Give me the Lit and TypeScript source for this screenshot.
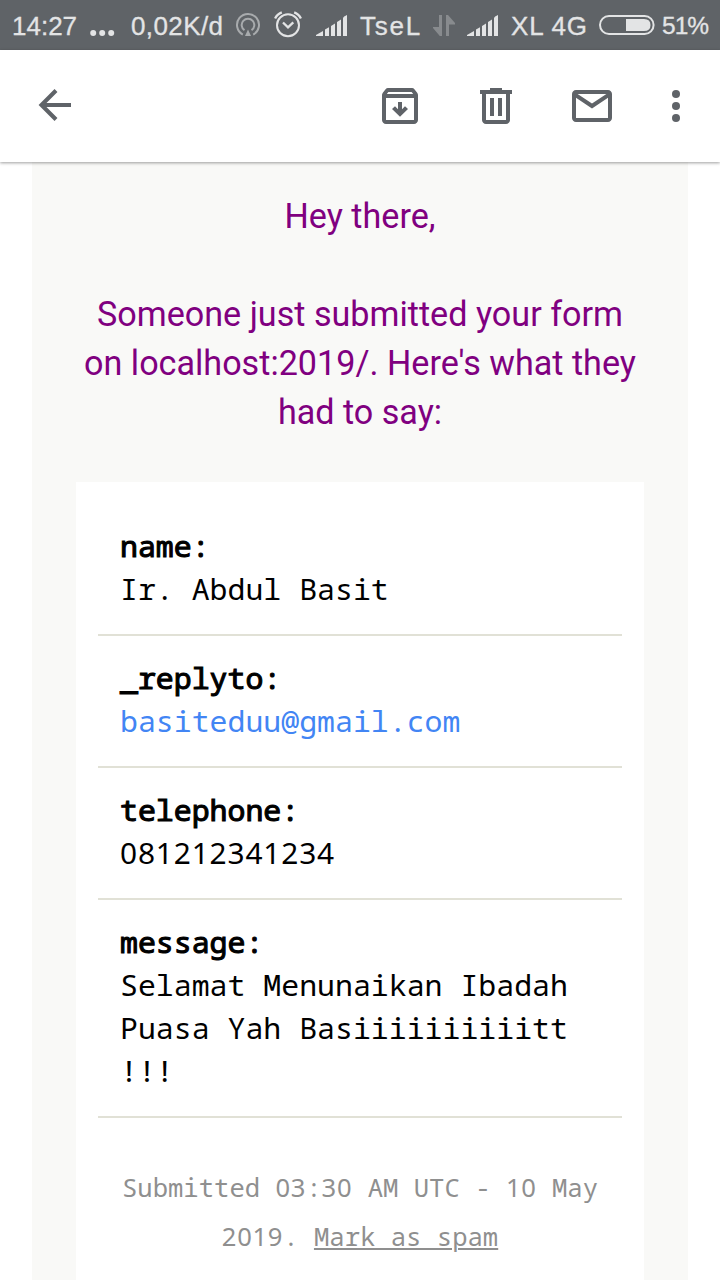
import { LitElement, html, css } from "lit";
import { customElement } from "lit/decorators.js";

const signal = html`<svg class="g" width="32" height="22" viewBox="0 0 32 22">
  <path fill="#e3e4e5" d="M0 21V20L7 16V21ZM9 21V14.4L13 12.2V21ZM15 21V11L19 8.6V21ZM21 21V7L25 4.5V21ZM27 21V3Q27.2 1.6 31 0V21Z"/>
</svg>`;

const fields = [
  { key: "name", value: html`Ir. Abdul Basit` },
  { key: "_replyto", value: html`<a class="mail">basiteduu@gmail.com</a>` },
  { key: "telephone", value: html`<span class="num">081212341234</span>` },
  { key: "message", value: html`Selamat Menunaikan Ibadah Puasa Yah Basiiiiiiiiiitt !!!` },
];

@customElement("status-bar")
class StatusBar extends LitElement {
  static styles = css`
    :host {
      display: grid;
      grid-template-columns: 78px 41px 104px 39px 42px 44px 73px 34px 44px 87px 64px 50px;
      align-items: center;
      height: 50px;
      padding-left: 12px;
      box-sizing: border-box;
      background: #5f6367;
      color: #e3e4e5;
      font: 26px/50px "Liberation Sans", Arial, sans-serif;
      white-space: nowrap;
      overflow: hidden;
    }
    span { padding-top: 1px; height: 50px; box-sizing: border-box; -webkit-text-stroke: 0.3px #e3e4e5; }
    .speed { letter-spacing: 0.4px; }
    .tsel { letter-spacing: 1.8px; }
    .xl { letter-spacing: 0.8px; }
    .pct { font-size: 24.5px; letter-spacing: -1px; }
    svg { display: block; }
    .g { margin-top: 1px; }
  `;
  render() {
    return html`
      <span>14:27</span>
      <svg width="26" height="50" viewBox="0 0 26 50" fill="#e3e4e5"><circle cx="3.2" cy="33" r="3"/><circle cx="12.2" cy="33" r="3"/><circle cx="21.2" cy="33" r="3"/></svg>
      <span class="speed">0,02K/d</span>
      <svg width="26" height="50" viewBox="0 0 26 50" fill="none" stroke="#a8abad" stroke-width="2">
        <path d="M7.8 34.6A11 11 0 1 1 18.2 34.6M9.5 30.2A6.3 6.3 0 1 1 16.5 30.2"/>
        <path d="M13 29.5L16 36H10Z" fill="#a8abad" stroke="none"/>
      </svg>
      <svg width="28" height="50" viewBox="0 0 28 50" fill="none" stroke="#e3e4e5" stroke-width="2">
        <circle cx="14" cy="25.3" r="11"/>
        <path d="M9 22.5L14 27.3L19.3 22.3M1.1 18.5Q3 14.2 7.8 12.4M26.9 18.5Q25 14.2 20.2 12.4" stroke-width="2.3"/>
      </svg>
      ${signal}
      <span class="tsel">TseL</span>
      <svg width="24" height="50" viewBox="0 0 24 50" fill="#888b8e"><path d="M9 15V36H6.8L0 28V27H6V15ZM13 36V15H15L22 23V24.5H16V36Z"/></svg>
      ${signal}
      <span class="xl">XL 4G</span>
      <svg width="57" height="50" viewBox="0 0 57 50"><rect x="2" y="16" width="53.6" height="18" rx="9" fill="none" stroke="#e3e4e5" stroke-width="2"/><path d="M28 19H46Q52.5 19 52.5 25T46 31H28Z" fill="#e3e4e5"/></svg>
      <span class="pct">51%</span>
    `;
  }
}

@customElement("mail-toolbar")
class MailToolbar extends LitElement {
  static styles = css`
    :host {
      display: flex;
      align-items: center;
      height: 112px;
      padding: 0 20px 0 32px;
      box-sizing: border-box;
      background: #fff;
      box-shadow: 0 1px 3px rgba(0, 0, 0, 0.38);
      position: relative;
    }
    svg { display: block; width: 48px; height: 48px; }
    .back { margin: -2px auto 0 0; }
    .icon { margin-right: 48px; }
    .more { margin-right: 0; margin-left: -12px; }
  `;
  render() {
    return html`
      <svg class="back" viewBox="0 0 48 48" fill="none" stroke="#5f6368"><path d="M39 24H10M24 9.5L9.5 24L24 38.5" stroke-width="4.1"/></svg>
      <svg class="icon" viewBox="0 0 24 24" fill="#5f6368"><path fill-rule="evenodd" d="M20.5 5.2L19.2 3.6C18.9 3.2 18.5 3 18 3H6C5.5 3 5.1 3.2 4.8 3.6L3.5 5.2C3.2 5.6 3 6 3 6.5V19C3 20.1 3.9 21 5 21H19C20.1 21 21 20.1 21 19V6.5C21 6 20.8 5.6 20.5 5.2ZM6.2 5H17.8L18.6 6H5.4ZM5 19V8H19V19Z"/><path d="M11 10V13.6L9.5 12.1L8 13.5L12 17.4L16 13.5L14.5 12.1L13 13.6V10Z"/></svg>
      <svg class="icon" viewBox="0 0 24 24" fill="#5f6368"><path fill-rule="evenodd" d="M15 4V3H9V4H4V6H5V19C5 20.1 5.9 21 7 21H17C18.1 21 19 20.1 19 19V6H20V4ZM17 19H7V6H17ZM9 8H11V17H9ZM13 8H15V17H13Z"/></svg>
      <svg class="icon" viewBox="0 0 24 24" fill="#5f6368"><path fill-rule="evenodd" d="M20 4H4C2.9 4 2 4.9 2 6V18C2 19.1 2.9 20 4 20H20C21.1 20 22 19.1 22 18V6C22 4.9 21.1 4 20 4ZM19.2 6L12 10.8L4.8 6ZM4 18V7.9L12 13.2L20 7.9V18Z"/></svg>
      <svg class="more" viewBox="0 0 24 24" fill="#5f6368"><circle cx="12" cy="6" r="2"/><circle cx="12" cy="12" r="2"/><circle cx="12" cy="18" r="2"/></svg>
    `;
  }
}

@customElement("app-root")
class AppRoot extends LitElement {
  static styles = css`
    :host { display: block; width: 720px; height: 1280px; overflow: hidden; background: #fff; }
    .panel {
      margin: 0 32px;
      height: 1118px;
      padding: 30px 44px 0;
      box-sizing: border-box;
      background: #f9f9f7;
    }
    .intro {
      color: purple;
      font: 34.15px/49px Roboto, sans-serif;
      text-align: center;
    }
    p { margin: 0; }
    .intro p + p { margin-top: 49px; }
    .card {
      margin-top: 45px;
      height: 900px;
      padding: 22px 22px 0;
      background: #fff;
      font: 29.87px/43px "Droid Sans Mono", "Noto Sans Mono", "DejaVu Sans Mono", monospace;
      color: #000;
    }
    .row { padding: 20px 22px 24px; border-bottom: 2px solid #e1e1d6; }
    .key { -webkit-text-stroke: 1.1px #000; }
    .mail { color: #4285f4; }
    .foot {
      padding: 45px 20px 0;
      font-size: 25.6px;
      line-height: 49px;
      text-align: center;
      color: #8f8f8f;
    }
    .num { font-family: "Noto Sans", sans-serif; letter-spacing: 0.028em; }
    .spam { text-decoration: underline; text-decoration-thickness: 2px; text-underline-offset: 2px; }
  `;
  render() {
    return html`
      <status-bar></status-bar>
      <mail-toolbar></mail-toolbar>
      <div class="panel">
        <div class="intro">
          <p>Hey there,</p>
          <p>Someone just submitted your form<br />on localhost:2019/. Here's what they<br />had to say:</p>
        </div>
        <div class="card">
          ${fields.map((f) => html`<div class="row"><div class="key">${f.key}:</div><div>${f.value}</div></div>`)}
          <div class="foot">Submitted <span class="num">03</span>:<span class="num">30</span> AM UTC - <span class="num">10</span> May <span class="num">2019</span>. <a class="spam">Mark as spam</a></div>
        </div>
      </div>
    `;
  }
}
